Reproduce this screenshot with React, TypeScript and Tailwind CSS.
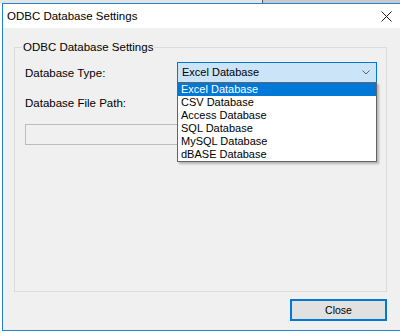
import { useState } from 'react';

const databaseTypes = [
  'Excel Database',
  'CSV Database',
  'Access Database',
  'SQL Database',
  'MySQL Database',
  'dBASE Database',
];

const font = { fontFamily: '"Liberation Sans", Arial, sans-serif' };

export default function App() {
  const [selected, setSelected] = useState(0);
  const [open, setOpen] = useState(true);

  return (
    <div className="w-[400px] h-[333px] bg-white overflow-hidden text-black" style={font}>
      <div className="flex h-[3px]">
        <div className="w-[262px] bg-[#e4e4e4]"></div>
        <div className="w-[1px] bg-[#555555]"></div>
        <div className="flex-1 bg-[#c9c9c9]"></div>
      </div>

      <div className="ml-[2px] w-[398px] border-l border-t border-b border-[#2183d8] flex flex-col">
        {/* title bar */}
        <div className="h-[24px] bg-white flex items-center pl-[4px]">
          <span className="text-[11.5px] leading-[14px]">ODBC Database Settings</span>
          <svg className="ml-auto mr-[8px]" width="11" height="11" viewBox="0 0 11 11">
            <path d="M0.5 0.5 L10.5 10.5 M10.5 0.5 L0.5 10.5" stroke="#1a1a1a" strokeWidth="1" />
          </svg>
        </div>

        {/* body */}
        <div className="h-[302px] bg-[#f0f0f0] flex flex-col">
          <div className="relative mt-[19px] ml-[11px] w-[373px] h-[245px] border border-[#dcdcdc] pl-[10px] pt-[14px]">
            <span className="absolute -top-[8px] left-[7px] px-[1px] bg-[#f0f0f0] text-[11.5px] leading-[14px]">
              ODBC Database Settings
            </span>

            <div className="flex items-center h-[21px]">
              <span className="w-[152px] text-[11.5px] leading-[14px]">Database Type:</span>
              <div className="relative">
                <button
                  onClick={() => setOpen(!open)}
                  className="w-[200px] h-[21px] border border-[#0078d7] bg-[#cce4f7] flex items-center pl-[4px] pr-[6px] text-[11px] text-left"
                >
                  <span className="flex-1">{databaseTypes[selected]}</span>
                  <svg width="8" height="5" viewBox="0 0 8 5">
                    <path d="M0.5 0.5 L4 4 L7.5 0.5" fill="none" stroke="#5f5f5f" strokeWidth="1" />
                  </svg>
                </button>
                {open && (
                  <div className="absolute left-0 top-[20px] w-[200px] bg-white border border-[#646464] shadow-[2px_2px_2px_rgba(0,0,0,0.25)] z-10">
                    {databaseTypes.map((t, i) => (
                      <div
                        key={t}
                        onClick={() => {
                          setSelected(i);
                          setOpen(false);
                        }}
                        className={`h-[13px] leading-[13px] pl-[3px] text-[11px] ${
                          i === selected ? 'bg-[#0078d7] text-white' : 'text-black'
                        }`}
                      >
                        {t}
                      </div>
                    ))}
                  </div>
                )}
              </div>
            </div>

            <div className="mt-[13px] h-[14px] text-[11.5px] leading-[14px]">Database File Path:</div>
            <div className="mt-[14px] w-[290px] h-[21px] border border-[#bcbcbc] bg-[#f0f0f0]"></div>
          </div>

          <button className="mt-[7px] ml-[287px] w-[97px] h-[22px] border-2 border-[#0078d7] bg-[#e1e1e1] text-[10.5px] leading-[14px]">
            Close
          </button>
        </div>
      </div>
    </div>
  );
}
